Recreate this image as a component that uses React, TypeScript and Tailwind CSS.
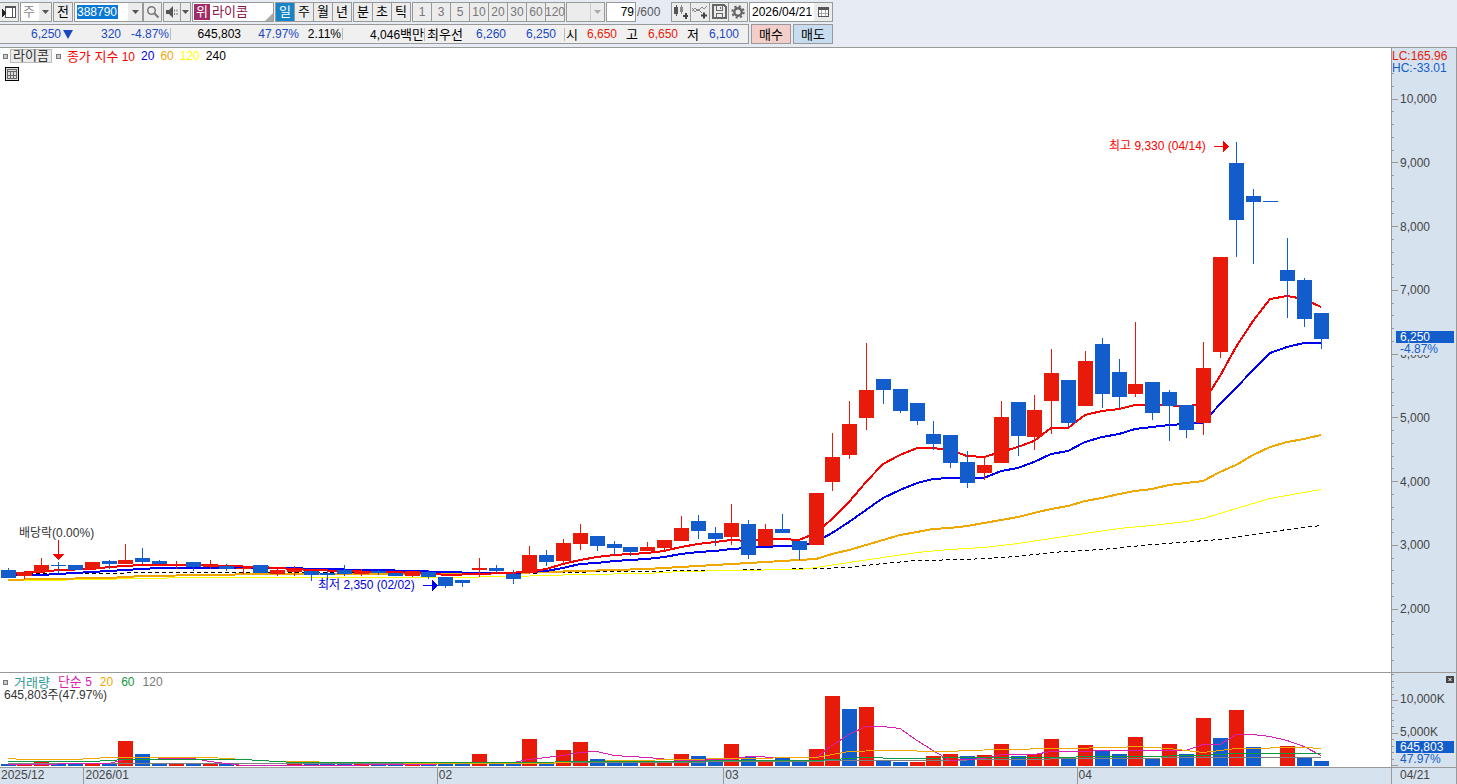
import type { ReactNode } from 'react';
import clsx from 'clsx';

const RED = '#e81b0a';
const BLUE = '#125ccb';

const CHART_W = 1391;
const PRICE_H = 624;
const VOLUME_H = 94;

// [color, body top, body bottom, wick top, wick bottom, volume height]
type Candle = [string, number, number, number, number, number];

const candles: Candle[] = [
  ['b', 522, 530, 520, 530, 2], ['r', 524, 528, 523, 531, 3], ['r', 517, 524, 510, 524, 5], ['b', 517, 518, 514, 526, 3],
  ['b', 517, 522, 517, 522, 3], ['r', 514, 521, 514, 521, 3], ['b', 513, 516, 512, 521, 3], ['r', 512, 516, 496, 516, 25],
  ['b', 510, 514, 500, 516, 12], ['b', 513, 516, 512, 516, 3], ['r', 516, 517, 513, 521, 3], ['b', 514, 519, 514, 523, 3],
  ['r', 517, 519, 512, 521, 2], ['b', 518, 521, 516, 523, 2], ['r', 520, 521, 520, 526, 1], ['b', 517, 525, 517, 525, 1],
  ['r', 522, 526, 521, 528, 1], ['r', 522, 524, 518, 528, 3], ['b', 523, 527, 523, 533, 3], ['b', 525, 527, 522, 532, 3],
  ['b', 522, 526, 517, 528, 3], ['r', 523, 526, 521, 528, 3], ['b', 523, 525, 522, 527, 1], ['b', 525, 528, 525, 528, 3],
  ['r', 523, 528, 523, 529, 3], ['b', 524, 529, 522, 531, 3], ['b', 529, 538, 529, 540, 2], ['b', 532, 535, 532, 539, 2],
  ['r', 520, 522, 510, 529, 12], ['b', 520, 523, 517, 525, 3], ['b', 526, 531, 522, 536, 3], ['r', 507, 525, 498, 526, 27],
  ['b', 507, 514, 502, 518, 3], ['r', 495, 513, 491, 516, 16], ['r', 485, 496, 476, 502, 24], ['b', 488, 498, 488, 503, 7],
  ['b', 496, 500, 493, 507, 4], ['b', 499, 504, 499, 508, 3], ['r', 499, 503, 494, 503, 4], ['r', 492, 500, 492, 502, 4],
  ['r', 480, 493, 468, 493, 12], ['b', 473, 483, 467, 491, 10], ['b', 485, 491, 479, 498, 4], ['r', 475, 489, 456, 497, 22],
  ['b', 476, 507, 472, 511, 9], ['r', 481, 498, 476, 498, 4], ['b', 481, 485, 466, 485, 9], ['b', 493, 502, 493, 512, 5],
  ['r', 445, 497, 445, 497, 17], ['r', 409, 434, 385, 443, 70], ['r', 376, 407, 353, 411, 57], ['r', 342, 370, 295, 382, 59],
  ['b', 331, 342, 331, 356, 5], ['b', 341, 363, 341, 365, 4], ['b', 355, 373, 355, 377, 4], ['b', 386, 396, 373, 402, 10],
  ['b', 387, 415, 387, 420, 12], ['b', 414, 435, 403, 440, 10], ['r', 417, 425, 409, 432, 11], ['r', 369, 415, 353, 415, 22],
  ['b', 354, 388, 354, 408, 10], ['r', 362, 389, 347, 402, 12], ['r', 325, 353, 301, 386, 27], ['b', 332, 375, 332, 379, 9],
  ['r', 313, 358, 303, 358, 21], ['b', 296, 346, 290, 360, 15], ['b', 324, 349, 311, 360, 12], ['r', 336, 346, 274, 349, 29],
  ['b', 334, 365, 334, 372, 8], ['b', 344, 358, 342, 393, 22], ['b', 357, 382, 357, 390, 12], ['r', 320, 375, 294, 387, 48],
  ['r', 209, 304, 209, 310, 28], ['b', 115, 172, 94, 209, 56], ['b', 148, 154, 141, 216, 19], ['b', 153, 154, 153, 154, 0],
  ['b', 222, 233, 190, 270, 20], ['b', 232, 271, 230, 279, 9], ['b', 265, 291, 265, 301, 5],
];

// volume bars are colored against the previous day's volume, which differs from the candle here
const volumeColor: Record<number, string> = {
  50: 'b', 54: 'r', 55: 'r', 56: 'r', 69: 'r', 72: 'b', 73: 'r', 76: 'r',
};

const cx = (i: number) => Math.floor(8.1 + i * 16.8334);

// moving averages, [candle index, y]
type Series = { color: string; width: number; dash?: string; points: [number, number][] };

const priceLines: Series[] = [
  {
    color: '#000', width: 1, dash: '4 3',
    points: [[0, 526], [2, 525], [12, 524], [20, 524], [28, 525], [30, 525], [36, 523], [42, 522], [48, 520], [50, 519], [52, 515], [54, 512], [57, 511], [60, 508], [62, 504], [64, 502], [65, 501], [68, 496], [72, 491], [74, 486], [76, 481], [78, 477]],
  },
  {
    color: '#ffff00', width: 1,
    points: [[0, 532], [2, 532], [8, 530], [11, 529], [26, 529], [30, 528], [34, 526], [38, 525], [40, 523], [43, 522], [47, 521], [48, 519], [50, 514], [52, 509], [54, 504], [56, 501], [58, 499], [60, 495], [62, 490], [64, 485], [66, 480], [68, 477], [70, 473], [71, 470], [72, 465], [74, 455], [75, 450], [76, 447], [78, 441]],
  },
  {
    color: '#f0a800', width: 2,
    points: [[0, 532], [2, 531], [6, 530], [8, 528], [12, 527], [15, 526], [26, 526], [30, 525], [34, 523], [38, 521], [42, 517], [46, 513], [48, 511], [49, 506], [50, 502], [51, 497], [52, 492], [53, 487], [54, 484], [55, 481], [56, 480], [57, 478], [58, 475], [59, 472], [60, 469], [61, 465], [62, 461], [63, 458], [64, 453], [65, 450], [66, 446], [67, 443], [68, 441], [69, 437], [70, 435], [71, 433], [72, 424], [73, 417], [74, 407], [75, 399], [76, 394], [77, 391], [78, 387]],
  },
  {
    color: '#0000f0', width: 2,
    points: [[0, 527], [2, 527], [3, 526], [5, 524], [6, 523], [7, 522], [8, 521], [9, 520], [17, 520], [18, 521], [22, 522], [26, 524], [28, 525], [30, 525], [32, 523], [33, 520], [34, 516], [35, 515], [36, 513], [37, 512], [38, 511], [39, 509], [40, 506], [41, 504], [42, 503], [43, 501], [44, 500], [46, 498], [47, 498], [48, 494], [49, 485], [50, 474], [51, 462], [52, 450], [53, 442], [54, 435], [55, 431], [56, 430], [58, 430], [59, 423], [60, 420], [61, 414], [62, 406], [63, 403], [64, 394], [65, 389], [66, 386], [67, 381], [68, 379], [69, 377], [71, 375], [72, 356], [73, 340], [74, 322], [75, 305], [76, 299], [77, 295], [78, 295]],
  },
  {
    color: '#f80000', width: 2,
    points: [[0, 525], [2, 524], [3, 522], [5, 521], [6, 519], [7, 518], [8, 517], [12, 517], [13, 518], [15, 519], [18, 522], [22, 524], [25, 525], [26, 527], [28, 526], [31, 524], [32, 521], [33, 516], [34, 512], [35, 509], [36, 507], [38, 505], [39, 503], [40, 499], [41, 496], [42, 494], [43, 492], [44, 493], [46, 491], [47, 492], [48, 485], [49, 471], [50, 454], [51, 434], [52, 416], [53, 407], [54, 400], [55, 400], [56, 402], [57, 408], [58, 409], [59, 404], [60, 399], [61, 393], [62, 380], [63, 380], [64, 367], [65, 363], [66, 361], [67, 357], [69, 357], [70, 359], [71, 355], [72, 328], [73, 299], [74, 273], [75, 251], [76, 248], [77, 251], [78, 259]],
  },
];

const volumeLines: Series[] = [
  { color: '#808080', width: 1, points: [[0, 90], [28, 90], [35, 89], [48, 88], [49, 87], [56, 87], [58, 86], [66, 85], [71, 84], [78, 84]] },
  { color: '#da1eb0', width: 1, points: [[0, 91], [6, 90], [7, 86], [11, 85], [12, 88], [14, 92], [20, 92], [22, 91], [24, 91], [30, 89], [31, 86], [32, 84], [33, 82], [34, 79], [35, 78], [36, 82], [38, 84], [40, 87], [43, 86], [44, 83], [46, 84], [48, 84], [49, 72], [50, 61], [51, 53], [52, 53], [53, 55], [54, 67], [55, 77], [56, 87], [58, 85], [59, 81], [61, 81], [62, 78], [67, 77], [70, 77], [71, 71], [72, 71], [73, 61], [74, 61], [75, 63], [76, 67], [77, 73], [78, 82]] },
  { color: '#f0a800', width: 1, points: [[0, 85], [1, 86], [4, 86], [6, 84], [12, 84], [16, 88], [26, 90], [32, 90], [34, 88], [40, 86], [43, 85], [48, 84], [50, 78], [52, 77], [56, 78], [57, 77], [59, 76], [66, 74], [67, 73], [69, 75], [71, 79], [72, 77], [73, 75], [77, 74], [78, 75]] },
  { color: '#10983c', width: 1, points: [[0, 88], [5, 88], [7, 86], [14, 86], [17, 89], [30, 89], [35, 88], [48, 87], [50, 85], [51, 84], [53, 85], [58, 84], [60, 84], [67, 83], [71, 82], [73, 80], [78, 80]] },
];

const Lines = ({ series }: { series: Series[] }) => (
  <>
    {series.map((s) => (
      <polyline
        key={s.color}
        points={s.points.map(([i, y]) => `${cx(i)},${y}`).join(' ')}
        fill="none"
        stroke={s.color}
        strokeWidth={s.width}
        strokeDasharray={s.dash}
        transform={s.width === 1 ? 'translate(0 0.5)' : undefined}
      />
    ))}
  </>
);

const Down = ({ className }: { className?: string }) => (
  <svg viewBox="0 0 7 4" className={clsx('h-1 w-[7px]', className)} aria-hidden="true">
    <path d="M0 0h7L3.5 4z" fill="currentColor" />
  </svg>
);

const Tool = ({ label, className, children }: { label?: string; className?: string; children: ReactNode }) => (
  <button aria-label={label} className={clsx('flex h-5 items-center justify-center border border-[#999] bg-[#ececec]', className)}>
    {children}
  </button>
);

const Group = ({ items, active, muted }: { items: string[]; active?: string; muted?: boolean }) => (
  <div className="flex border-l border-[#999]">
    {items.map((t) => (
      <button
        key={t}
        className={clsx(
          'flex h-5 w-[19px] items-center justify-center border border-l-0 border-[#999]',
          t === active ? 'bg-[#1684c6] text-white' : 'bg-[#ececec]',
          muted ? 'text-[#777]' : 'text-[13px]',
        )}
      >
        {t}
      </button>
    ))}
  </div>
);

const Toolbar = () => (
  <div className="flex h-[23px] items-center whitespace-nowrap">
    <Tool label="패널 열기" className="mr-px w-[19px] border-l-0">
      <svg viewBox="0 0 15 14" className="h-3.5 w-[15px]" shapeRendering="crispEdges">
        <path d="M3.5 1.5h10v11h-10z" fill="#fff" stroke="#555" />
        <path d="M3 1h11v2H3zM10 3h1v10h-1z" fill="#555" />
        <path d="M0 4l5 4-5 4z" fill="#222" />
      </svg>
    </Tool>
    <div className="relative mr-px h-5 w-8 border border-[#999] bg-white">
      <select aria-label="시장 구분" className="h-full w-full appearance-none pl-0.5 text-[13px] text-[#888]">
        <option>주</option>
      </select>
      <span className="pointer-events-none absolute inset-y-0 right-0 flex w-3 items-center justify-center bg-[#ececec] text-[#555]">
        <Down />
      </span>
    </div>
    <Tool className="mr-px w-5 text-[13px]">전</Tool>
    <div className="flex h-5 w-[69px] items-center border border-[#999] bg-white">
      <input aria-label="종목코드" defaultValue="388790" className="ml-0.5 h-3.5 w-[41px] bg-[#0a78d6] text-white outline-none" />
      <button aria-label="종목 목록" className="ml-auto flex h-full w-3.5 items-center justify-center bg-[#ececec] text-[#555]">
        <Down />
      </button>
    </div>
    <Tool label="종목 검색" className="w-[19px]">
      <svg viewBox="0 0 14 14" className="h-3.5 w-3.5" fill="none" stroke="#777">
        <circle cx="5.5" cy="5.5" r="3.8" strokeWidth="1.5" />
        <path d="M8.5 8.5l4 4" strokeWidth="2" />
      </svg>
    </Tool>
    <Tool label="음성" className="ml-px w-[18px]">
      <svg viewBox="0 0 14 12" className="h-3 w-3.5">
        <path d="M1 4h3l4-4v12l-4-4H1z" fill="#555" />
        <path d="M9.5 3.5v2M9.500 7v2M12 3.5v2M12 7v2" stroke="#777" />
      </svg>
    </Tool>
    <Tool label="음성 설정" className="-ml-px w-[11px]">
      <Down className="shrink-0 text-[#555]" />
    </Tool>
    <div className="ml-px flex h-5 w-[82px] items-center border border-[#999] bg-white text-[13px]">
      <span className="ml-px h-4 w-4 bg-[#a02c68] text-center leading-4 text-white">위</span>
      <span className="ml-0.5 text-[#8a1048]">라이콤</span>
      <svg viewBox="0 0 8 8" className="ml-auto h-2 w-2 self-end">
        <path d="M8 0v8H0z" fill="#aaa" />
      </svg>
    </div>
    <div className="ml-px flex gap-px">
      <Group items={['일', '주', '월', '년']} active="일" />
      <Group items={['분', '초', '틱']} />
      <Group items={['1', '3', '5', '10', '20', '30', '60', '120']} muted />
    </div>
    <div className="relative ml-px h-5 w-[39px] border border-[#999] bg-[#ececec]">
      <select aria-label="주기 선택" disabled className="h-full w-full appearance-none" />
      <span className="pointer-events-none absolute inset-y-0 right-0 flex w-3.5 items-center justify-center border-l border-[#ccc] text-[#aaa]">
        <Down />
      </span>
    </div>
    <input aria-label="표시 개수" defaultValue="79" className="ml-px h-5 w-[30px] border border-[#999] bg-white pr-px text-right outline-none" />
    <span className="ml-px w-[34px] text-[#555]">/600</span>
    <div className="flex">
      <Tool label="캔들 추가" className="w-5">
        <svg viewBox="0 0 16 14" className="h-3.5 w-4" shapeRendering="crispEdges">
          <path d="M1 2h4v7H1zM2.500 0h1v11h-1z" fill="#555" />
          <path d="M7 2h3v5H7zM8 0h1v9H8z" fill="#888" />
          <path d="M10 10h5v2h-5zM12 8h2v6h-2z" fill="#444" />
        </svg>
      </Tool>
      <Tool label="지표 추가" className="w-[19px] border-l-0">
        <svg viewBox="0 0 16 14" className="h-3.5 w-4" fill="none">
          <path d="M0 6l3-3 3 3 4-4 2 2 3-3M0 3l3 4 3-3 4 4" stroke="#888" />
          <path d="M9 10.5h6M12 7.5v6" stroke="#444" strokeWidth="2" />
        </svg>
      </Tool>
      <Tool label="저장" className="w-[19px] border-l-0">
        <svg viewBox="0 0 15 15" className="h-[15px] w-[15px]" fill="none" stroke="#666" shapeRendering="crispEdges">
          <path d="M1 1h11l2 2v11H1z" strokeWidth="2" />
          <path d="M4.5 2v4h6V2M4.5 13V9h6v4M8.5 3v2" />
        </svg>
      </Tool>
      <Tool label="설정" className="w-[19px] border-l-0">
        <svg viewBox="0 0 14 14" className="h-3.5 w-3.5" fill="none" stroke="#666">
          <circle cx="7" cy="7" r="3.7" strokeWidth="2.4" />
          <circle cx="7" cy="7" r="5.7" strokeWidth="2" strokeDasharray="2.2 2.28" />
        </svg>
      </Tool>
    </div>
    <div className="ml-px flex h-5 w-[84px] items-center border border-[#999] bg-white">
      <input aria-label="기준일" defaultValue="2026/04/21" className="w-[64px] pl-0.5 outline-none" />
      <button aria-label="달력" className="flex h-full flex-1 items-center justify-center bg-[#ececec]">
        <svg viewBox="0 0 11 11" className="h-[11px] w-[11px] shrink-0" shapeRendering="crispEdges">
          <path d="M.5 1.5h10v9H.5z" fill="#fff" stroke="#555" />
          <path d="M0 1h11v3H0z" fill="#555" />
          <path d="M1 7.5h9M3.5 4v6M7.5 4v6" stroke="#aaa" />
        </svg>
      </button>
    </div>
  </div>
);

const Cell = ({ w, className, children }: { w: string; className?: string; children: ReactNode }) => (
  <span className={clsx('shrink-0 text-right', w, className)}>{children}</span>
);

const QuoteBar = () => (
  <div className="flex h-5 items-center whitespace-nowrap">
    <div className="flex h-full w-[749px] items-center border border-l-0 border-[#999] bg-[#f0f0f0] text-[#1a48c0]">
      <Cell w="w-[73px]" className="flex items-center justify-end gap-0.5">
        6,250
        <svg viewBox="0 0 10 9" className="h-[9px] w-2.5"><path d="M0 0h10L5 9z" fill="#1a48c0" /></svg>
      </Cell>
      <Cell w="w-12">320</Cell>
      <Cell w="w-[50px]" className="border-r border-[#bbb] pr-px">-4.87%</Cell>
      <Cell w="w-[70px]" className="text-black">645,803</Cell>
      <Cell w="w-[58px]">47.97%</Cell>
      <Cell w="w-11" className="border-r border-[#bbb] pr-px text-black">2.11%</Cell>
      <Cell w="w-[82px]" className="border-r border-[#bbb] text-black">4,046<span className="text-[13px]">백만</span></Cell>
      <Cell w="w-[38px]" className="text-[13px] text-black">최우선</Cell>
      <Cell w="w-[43px]">6,260</Cell>
      <Cell w="w-[50px]">6,250</Cell>
      <Cell w="w-[22px]" className="ml-2 border-l border-[#bbb] pl-px text-left! text-[13px] text-black">시</Cell>
      <Cell w="w-[31px]" className="text-[#e81b0a]">6,650</Cell>
      <Cell w="w-[21px]" className="text-[13px] text-black">고</Cell>
      <Cell w="w-10" className="text-[#e81b0a]">6,650</Cell>
      <Cell w="w-[21px]" className="text-[13px] text-black">저</Cell>
      <Cell w="w-10">6,100</Cell>
    </div>
    <button className="ml-0.5 h-full w-10 border border-[#999] bg-[#f4cfca] text-[13px]">매수</button>
    <button className="ml-0.5 h-full w-10 border border-[#999] bg-[#c8dcf0] text-[13px]">매도</button>
  </div>
);

const Dot = () => <span className="h-[5px] w-[5px] border border-[#777] bg-[#ccc]" />;

// label laid over the chart, anchored to chart coordinates
const Mark = ({ x, y, className, children }: { x: number; y: number; className?: string; children: ReactNode }) => (
  <span
    className={clsx('absolute whitespace-nowrap leading-3', className)}
    style={{ left: `${(x / CHART_W) * 100}%`, top: `${(y / PRICE_H) * 100}%` }}
  >
    {children}
  </span>
);

const PriceChart = () => (
  <div className="relative min-h-0 min-w-0 flex-1 bg-white">
    <svg viewBox={`0 0 ${CHART_W} ${PRICE_H}`} preserveAspectRatio="none" className="absolute inset-0 h-full w-full" shapeRendering="crispEdges">
      <Lines series={priceLines} />
      {candles.map(([c, top, bottom, high, low], i) => {
        const x = cx(i);
        return (
          <g key={i} fill={c === 'r' ? RED : BLUE}>
            <rect x={x} y={high} width="1" height={low - high} />
            <rect x={x - 7} y={top} width="15" height={bottom - top} />
          </g>
        );
      })}
      <path d="M58 492h1v14h-1zM53 506h11l-5.5 6z" fill="#f80000" />
      <path d="M423 537h9v1h-9zM432 532l6 5.5-6 5.5z" fill="#0000f0" />
      <path d="M1214 98h9v1h-9zM1223 93l6 5.5-6 5.5z" fill="#f80000" />
    </svg>
    <Mark x={19} y={479} className="text-[#333]">배당락(0.00%)</Mark>
    <Mark x={318} y={531} className="text-[#0000d8]">최저 2,350 (02/02)</Mark>
    <Mark x={1109} y={92} className="text-[#f80000]">최고 9,330 (04/14)</Mark>
    <div className="relative flex h-4 items-center gap-1.5 pl-[3px]">
      <div className="flex items-center gap-1">
        <Dot />
        <button className="-ml-0.5 h-3.5 border border-[#bbb] bg-[#ececec] px-0.5 text-[13px] leading-3 text-[#333]">라이콤</button>
        <Dot />
      </div>
      <span className="text-[#f80000]"><span className="text-[13px]">종가 지수</span> 10</span>
      <span className="text-[#0000d8]">20</span>
      <span className="text-[#f0a800]">60</span>
      <span className="text-[#ffff00]">120</span>
      <span>240</span>
    </div>
    <button aria-label="데이터 표" className="relative ml-[5px] mt-[3px] block border border-black bg-[#ddd] p-px">
      <svg viewBox="0 0 10 10" className="h-2.5 w-2.5" shapeRendering="crispEdges" fill="none" stroke="#666">
        <path d="M.5.5h9v9h-9zM0 2.5h10M0 6.5h10M3.5 2v8M6.5 2v8" />
      </svg>
    </button>
  </div>
);

const VolumeChart = () => (
  <div className="relative min-w-0 flex-1 bg-white">
    <svg viewBox={`0 0 ${CHART_W} ${VOLUME_H}`} preserveAspectRatio="none" className="absolute inset-0 h-full w-full" shapeRendering="crispEdges">
      {candles.map((candle, i) => (
        <rect
          key={i}
          x={cx(i) - 7}
          y={93 - candle[5]}
          width="15"
          height={candle[5]}
          fill={(volumeColor[i] ?? candle[0]) === 'r' ? RED : BLUE}
        />
      ))}
      <Lines series={volumeLines} />
    </svg>
    <div className="relative flex items-center gap-2 pl-[3px] pt-0.5 leading-[13px]">
      <div className="flex items-center gap-1.5 text-[13px]">
        <Dot />
        <span className="text-[#30989a]">거래량</span>
      </div>
      <span className="text-[#da1eb0]"><span className="text-[13px]">단순</span> 5</span>
      <span className="text-[#f0a800]">20</span>
      <span className="text-[#10983c]">60</span>
      <span className="text-[#777]">120</span>
    </div>
    <p className="relative pl-1 leading-[13px] text-[#333]">645,803주(47.97%)</p>
  </div>
);

const priceTicks = ['10,000', '9,000', '8,000', '7,000', '6,000', '5,000', '4,000', '3,000', '2,000'];

const AxisLabel = ({ y, h, className, children }: { y: number; h: number; className?: string; children: ReactNode }) => (
  <span className={clsx('absolute leading-3', className ?? 'left-2 text-[#444]')} style={{ top: `${(y / h) * 100}%` }}>
    {children}
  </span>
);

const axisCol = 'relative w-[66px] shrink-0 border-x border-[#999] bg-[#d7e2ef]';

const PriceAxis = () => (
  <div className={axisCol}>
    <svg viewBox={`0 0 64 ${PRICE_H}`} preserveAspectRatio="none" className="absolute inset-0 h-full w-full" shapeRendering="crispEdges">
      {Array.from({ length: 47 }, (_, i) => (
        <rect key={i} x="0" y={Math.round(25 + i * 12.75)} width={i % 5 === 2 ? 6 : 2} height="1" fill="#999" />
      ))}
    </svg>
    {priceTicks.map((t, i) => (
      <AxisLabel key={t} y={Math.round(45 + i * 63.75)} h={PRICE_H}>{t}</AxisLabel>
    ))}
    <AxisLabel y={2} h={PRICE_H} className="left-0 text-[#e81b0a]">LC:165.96</AxisLabel>
    <AxisLabel y={14} h={PRICE_H} className="left-0 text-[#125ccb]">HC:-33.01</AxisLabel>
    <AxisLabel y={283} h={PRICE_H} className="left-1 right-0.5 bg-[#125ccb] pl-1 text-white">6,250</AxisLabel>
    <AxisLabel y={295} h={PRICE_H} className="left-2 bg-[#d7e2ef] text-[#125ccb]">-4.87%</AxisLabel>
  </div>
);

const VolumeAxis = () => (
  <div className={axisCol}>
    <svg viewBox={`0 0 64 ${VOLUME_H}`} preserveAspectRatio="none" className="absolute inset-0 h-full w-full" shapeRendering="crispEdges">
      {Array.from({ length: 15 }, (_, i) => (
        <rect key={i} x="0" y={Math.round(1 + i * 6.5)} width={i % 5 === 4 ? 6 : 2} height="1" fill="#999" />
      ))}
    </svg>
    <AxisLabel y={20} h={VOLUME_H}>10,000K</AxisLabel>
    <AxisLabel y={53} h={VOLUME_H}>5,000K</AxisLabel>
    <AxisLabel y={68} h={VOLUME_H} className="left-1 right-0.5 bg-[#125ccb] pl-1 text-white">645,803</AxisLabel>
    <AxisLabel y={80} h={VOLUME_H} className="left-2 text-[#125ccb]">47.97%</AxisLabel>
    <button aria-label="닫기" className="absolute right-0.5 top-[3px] h-[7px] w-2 bg-[#444]">
      <svg viewBox="0 0 8 7" className="h-[7px] w-2" stroke="#fff"><path d="M2.5 2l3 3M5.5 2l-3 3" /></svg>
    </button>
  </div>
);

const months: [string, string][] = [
  ['2025/12', 'w-[6%]'],
  ['2026/01', 'w-[25.4%]'],
  ['02', 'w-[20.6%]'],
  ['03', 'w-[25.4%]'],
  ['04', 'flex-1'],
];

const DateAxis = () => (
  <div className="flex h-[17px] border-t border-[#999] bg-[#d7e2ef] leading-[15px] text-[#444]">
    <div className="flex min-w-0 flex-1">
      {months.map(([label, width], i) => (
        <span key={label} className={clsx('pl-px', width, i > 0 && 'border-l border-[#999]')}>{label}</span>
      ))}
    </div>
    <div className="w-[66px] shrink-0 border-x border-[#999] pl-2">04/21</div>
  </div>
);

export default function App() {
  return (
    <div className="flex h-screen min-h-96 flex-col overflow-hidden bg-[#e7ecf4] font-['Liberation_Sans','Noto_Sans_CJK_KR',sans-serif] text-[12px] leading-none text-black">
      <Toolbar />
      <div className="mb-[3px] mt-px">
        <QuoteBar />
      </div>
      <main className="flex min-h-0 flex-1 border-t border-[#999]">
        <PriceChart />
        <PriceAxis />
      </main>
      <section className="flex h-[95px] border-t border-[#999]">
        <VolumeChart />
        <VolumeAxis />
      </section>
      <DateAxis />
    </div>
  );
}
